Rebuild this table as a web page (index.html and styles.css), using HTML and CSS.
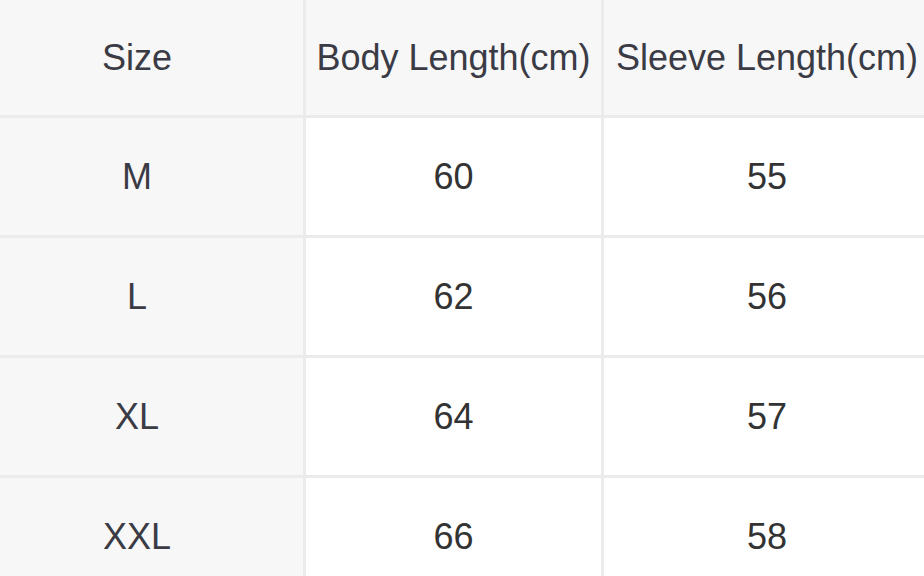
FILE: index.html
```html
<!DOCTYPE html>
<html>
<head>
<meta charset="utf-8">
<link rel="stylesheet" href="styles.css">
</head>
<body>
<div class="size-table">
  <div class="cell head">Size</div>
  <div class="cell head">Body Length(cm)</div>
  <div class="cell head">Sleeve Length(cm)</div>

  <div class="cell label">M</div>
  <div class="cell">60</div>
  <div class="cell">55</div>

  <div class="cell label">L</div>
  <div class="cell">62</div>
  <div class="cell">56</div>

  <div class="cell label">XL</div>
  <div class="cell">64</div>
  <div class="cell">57</div>

  <div class="cell label">XXL</div>
  <div class="cell">66</div>
  <div class="cell">58</div>
</div>
</body>
</html>
```
FILE: styles.css
```css
html, body {
  margin: 0;
  padding: 0;
  background: #ffffff;
  overflow: hidden;
}

.size-table {
  display: grid;
  grid-template-columns: 332px 295px 326px;
  grid-template-rows: 115px 117px 117px 117px 117px;
  gap: 3px;
  padding: 3px;
  background: #ebebeb;
  width: max-content;
  margin: -3px 0 0 -32px;
  font-family: "Liberation Sans", Arial, sans-serif;
  font-size: 36px;
}

.cell {
  display: flex;
  align-items: center;
  justify-content: center;
  background: #ffffff;
  color: #333333;
  white-space: nowrap;
}

.head,
.label {
  background: #f7f7f7;
  color: #3a3b45;
}
```
